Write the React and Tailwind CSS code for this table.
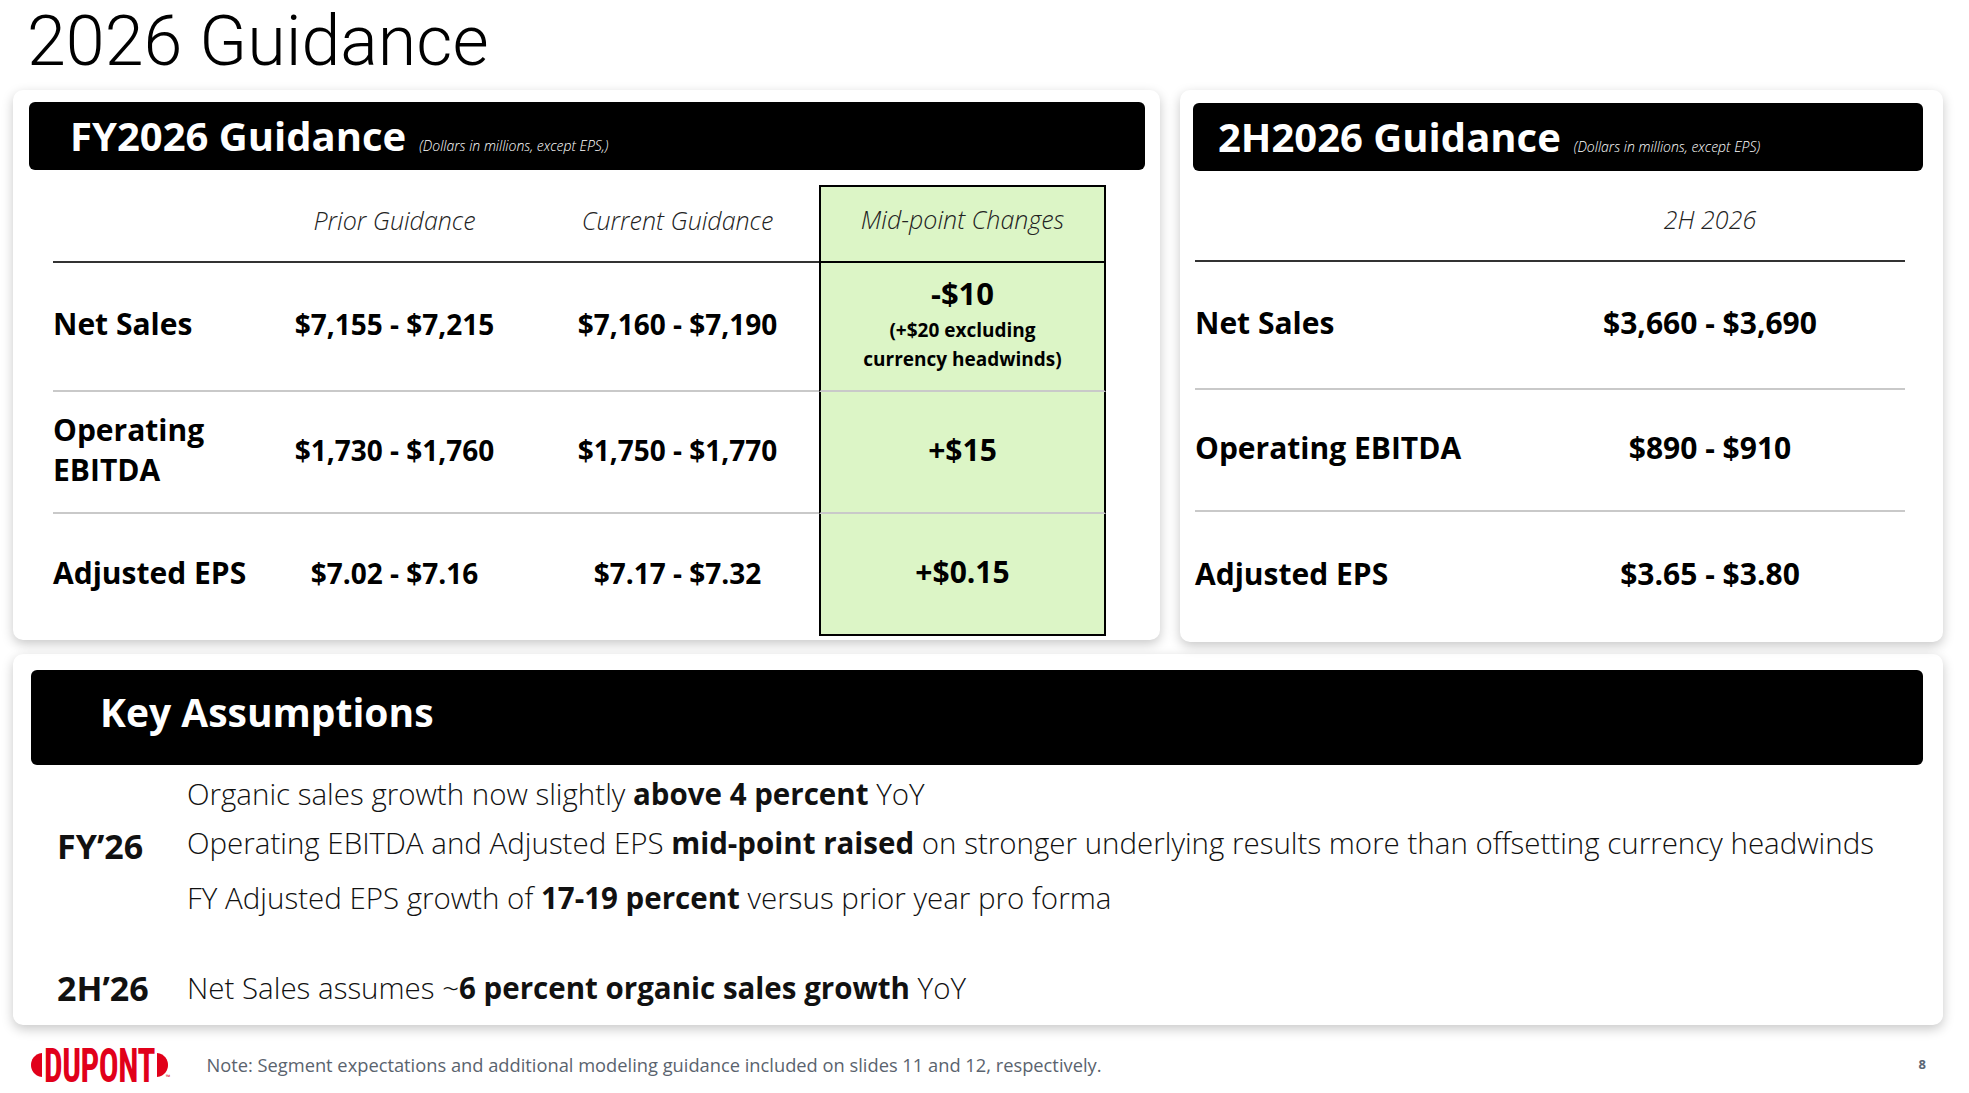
import React from "react";

const fyRows = [
  { label: "Net Sales", prior: "$7,155 - $7,215", current: "$7,160 - $7,190", h: "h-[129px]", border: "border-b-2 border-[#c9c9c9]" },
  { label: "Operating EBITDA", prior: "$1,730 - $1,760", current: "$1,750 - $1,770", change: "+$15", h: "h-[122px]", border: "border-b-2 border-[#c9c9c9]" },
  { label: "Adjusted EPS", prior: "$7.02 - $7.16", current: "$7.17 - $7.32", change: "+$0.15", h: "h-[122px]", border: "" },
];

const hRows = [
  { label: "Net Sales", value: "$3,660 - $3,690", h: "h-[128px]", border: "border-b-2 border-[#c9c9c9]" },
  { label: "Operating EBITDA", value: "$890 - $910", h: "h-[122px]", border: "border-b-2 border-[#c9c9c9]" },
  { label: "Adjusted EPS", value: "$3.65 - $3.80", h: "h-[128px]", border: "" },
];

const SideMark = ({ flip }) => (
  <svg width="11" height="24" viewBox="0 0 11 24" className={flip ? "-scale-x-100" : ""}>
    <path d="M11 0 C3 1 0 7 0 12 C0 17 3 23 11 24 Z" fill="currentColor" />
  </svg>
);

const Logo = () => (
  <div className="flex items-center text-[#e1001a]">
    <SideMark />
    <span className="mx-[2px] font-['Roboto_Condensed',sans-serif] font-bold text-[33px] leading-none tracking-[-0.5px] scale-y-[1.45]">
      DUPONT
    </span>
    <SideMark flip />
    <span className="self-end text-[6px] leading-none -ml-[2px] mb-[2px]">™</span>
  </div>
);

const App = () => {
  return (
    <div className="w-[1969px] h-[1093px] bg-white overflow-hidden text-black font-['Open_Sans','Noto_Sans',sans-serif]">
      <h1 className="h-[90px] pl-[27px] font-['Roboto','Open_Sans',sans-serif] text-[70px] font-light leading-[82px]">2026 Guidance</h1>

      <div className="flex gap-[20px] pl-[13px]">
        {/* FY2026 card */}
        <div className="w-[1147px] h-[550px] rounded-[10px] bg-white shadow-[0_4px_12px_rgba(0,0,0,0.22)] pt-[12px] pl-[16px] pr-[15px]">
          <div className="h-[68px] rounded-[6px] bg-black flex items-center pl-[41px]">
            <div className="flex items-baseline text-white">
              <span className="text-[40px] font-bold leading-none">FY2026 Guidance</span>
              <span className="ml-[13px] text-[14px] italic font-light">(Dollars in millions, except EPS,)</span>
            </div>
          </div>

          <div className="mt-[15px] ml-[24px] w-[1053px] grid grid-cols-[200px_283px_283px_287px]">
            <div className="h-[78px] border-b-2 border-[#333]" />
            <div className="h-[78px] border-b-2 border-[#333] pb-[5px] flex items-center justify-center text-[25px] italic font-light text-[#222]">Prior Guidance</div>
            <div className="h-[78px] border-b-2 border-[#333] pb-[5px] flex items-center justify-center text-[25px] italic font-light text-[#222]">Current Guidance</div>
            <div className="h-[78px] border-2 border-black bg-[#dcf5c6] pb-[8px] flex items-center justify-center text-[25px] italic font-light text-[#222]">Mid-point Changes</div>

            {fyRows.map((r, i) => (
              <React.Fragment key={r.label}>
                <div className={`${r.h} ${r.border} pb-[5px] flex items-center text-[30px] font-bold leading-[40px]`}>{r.label}</div>
                <div className={`${r.h} ${r.border} pb-[5px] flex items-center justify-center text-[28px] font-bold`}>{r.prior}</div>
                <div className={`${r.h} ${r.border} pb-[5px] flex items-center justify-center text-[28px] font-bold`}>{r.current}</div>
                <div className={`${r.h} ${r.border} ${i === 2 ? "border-b-2 border-b-black" : ""} border-x-2 border-x-black bg-[#dcf5c6] pb-[5px] flex flex-col items-center justify-center font-bold`}>
                  {i === 0 ? (
                    <>
                      <span className="text-[31px] leading-[36px] pb-[5px]">-$10</span>
                      <span className="text-[19px] leading-[29px]">(+$20 excluding</span>
                      <span className="text-[19px] leading-[29px]">currency headwinds)</span>
                    </>
                  ) : (
                    <span className="text-[30px]">{r.change}</span>
                  )}
                </div>
              </React.Fragment>
            ))}
          </div>
        </div>

        {/* 2H2026 card */}
        <div className="w-[763px] h-[552px] rounded-[10px] bg-white shadow-[0_4px_12px_rgba(0,0,0,0.22)] pt-[13px] pl-[13px] pr-[20px]">
          <div className="h-[68px] rounded-[6px] bg-black flex items-center pl-[25px]">
            <div className="flex items-baseline text-white">
              <span className="text-[40px] font-bold leading-none">2H2026 Guidance</span>
              <span className="ml-[13px] text-[14px] italic font-light">(Dollars in millions, except EPS)</span>
            </div>
          </div>

          <div className="mt-[14px] ml-[2px] w-[710px] grid grid-cols-[320px_390px]">
            <div className="h-[77px] border-b-2 border-[#333]" />
            <div className="h-[77px] border-b-2 border-[#333] pb-[5px] flex items-center justify-center text-[25px] italic font-light text-[#222]">2H 2026</div>
            {hRows.map((r) => (
              <React.Fragment key={r.label}>
                <div className={`${r.h} ${r.border} pb-[6px] flex items-center text-[30px] font-bold`}>{r.label}</div>
                <div className={`${r.h} ${r.border} pb-[6px] flex items-center justify-center text-[30px] font-bold`}>{r.value}</div>
              </React.Fragment>
            ))}
          </div>
        </div>
      </div>

      {/* Key assumptions */}
      <div className="ml-[13px] mt-[12px] w-[1930px] h-[371px] rounded-[10px] bg-white shadow-[0_4px_12px_rgba(0,0,0,0.22)] pt-[16px] pl-[18px] pr-[20px]">
        <div className="h-[95px] rounded-[6px] bg-black flex items-center pl-[69px] pb-[10px]">
          <span className="text-[39px] font-bold text-white">Key Assumptions</span>
        </div>

        <div className="pl-[26px] text-[29.5px] font-light leading-[40px] text-[#111]">
          <div className="flex mt-[9px]">
            <div className="w-[130px] self-center text-[34px] font-bold">FY’26</div>
            <div className="flex flex-col">
              <p>Organic sales growth now slightly <b className="font-bold">above 4 percent</b> YoY</p>
              <p className="mt-[9px]">Operating EBITDA and Adjusted EPS <b className="font-bold">mid-point raised</b> on stronger underlying results more than offsetting currency headwinds</p>
              <p className="mt-[15px]">FY Adjusted EPS growth of <b className="font-bold">17-19 percent</b> versus prior year pro forma</p>
            </div>
          </div>
          <div className="flex mt-[50px]">
            <div className="w-[130px] text-[34px] font-bold">2H’26</div>
            <p>Net Sales assumes ~<b className="font-bold">6 percent organic sales growth</b> YoY</p>
          </div>
        </div>
      </div>

      {/* Footer */}
      <div className="h-[80px] flex items-center pl-[31px] pr-[43px]">
        <Logo />
        <p className="ml-[36px] text-[18.3px] text-[#5a636e]">
          Note: Segment expectations and additional modeling guidance included on slides 11 and 12, respectively.
        </p>
        <span className="ml-auto text-[13px] font-bold text-[#5a6675]">8</span>
      </div>
    </div>
  );
};

export default App;
